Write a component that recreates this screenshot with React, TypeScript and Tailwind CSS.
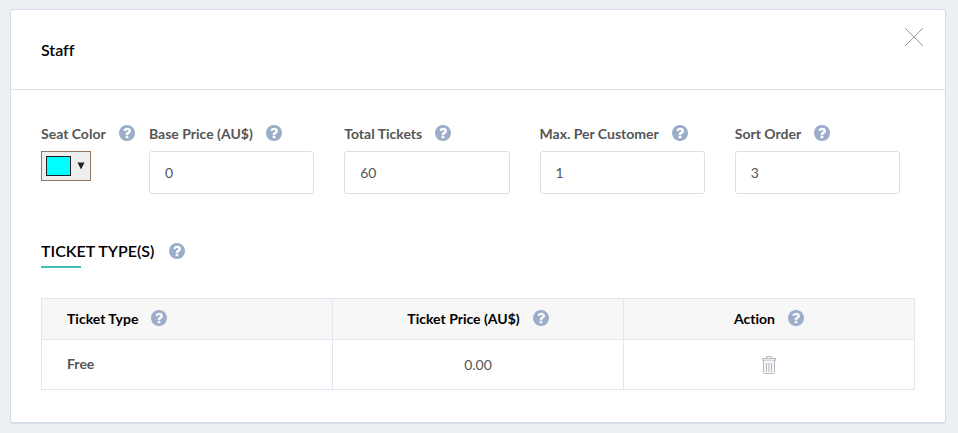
import { useState } from "react"

interface Field {
  id: string
  label: string
  value: string
}

const initialFields: Field[] = [
  { id: "base-price", label: "Base Price (AU$)", value: "0" },
  { id: "total-tickets", label: "Total Tickets", value: "60" },
  { id: "max-per-customer", label: "Max. Per Customer", value: "1" },
  { id: "sort-order", label: "Sort Order", value: "3" },
]

const ticketTypes = [{ name: "Free", price: "0.00" }]

function HelpIcon() {
  return (
    <svg viewBox="128 128 1536 1536" className="h-4 w-4 shrink-0 fill-[#9badc9]" aria-hidden="true">
      <path d="M1024 1376v-192q0-14-9-23t-23-9h-192q-14 0-23 9t-9 23v192q0 14 9 23t23 9h192q14 0 23-9t9-23zm256-672q0-88-55.5-163t-138.5-116-170-41q-243 0-371 213-15 24 8 42l132 100q7 6 19 6 16 0 25-12 53-68 86-92 34-24 86-24 48 0 85.5 26t37.5 59q0 38-20 61t-68 45q-63 28-115.5 86.5t-52.5 125.5v36q0 14 9 23t23 9h192q14 0 23-9t9-23q0-19 21.5-49.5t54.5-49.5q32-18 49-28.5t46-35 44.5-48 28-60.5 12.5-81zm384 192q0 209-103 385.5t-279.5 279.5-385.5 103-385.5-103-279.5-279.5-103-385.5 103-385.5 279.5-279.5 385.5-103 385.5 103 279.5 279.5 103 385.5z" />
    </svg>
  )
}

function TrashIcon() {
  return (
    <svg viewBox="0 0 14 18" className="h-[18px] w-3.5" fill="none" stroke="#b4b9c2" aria-hidden="true">
      <path d="M4.5 2V.5h5V2" />
      <path d="M.5 2.5h13v2H.5z" fill="#e9ebee" />
      <path d="M1.5 4.5v12q0 1 1 1h9q1 0 1-1v-12" fill="#f5f6f8" />
      <path d="M4.5 7v9M7 7v9M9.5 7v9" />
    </svg>
  )
}

export default function App() {
  const [fields, setFields] = useState(initialFields)

  const handleChange = (id: string, value: string) => {
    setFields(fields.map((field) => (field.id === id ? { ...field, value } : field)))
  }

  return (
    <div className="min-h-screen bg-[#ecf0f5] pt-[9px] pr-3 pb-2 pl-2.5 font-['Lato',sans-serif] text-sm text-[#555] [font-variant-ligatures:none]">
      <section className="rounded border border-b-2 border-[#d5dce5] bg-white">
        <header className="flex h-20 items-center justify-between border-b border-[#dce1e8] pr-[22px] pl-[30px]">
          <h1 className="text-base font-semibold text-black">Staff</h1>
          <button type="button" aria-label="Close" className="mb-[26px]">
            <svg viewBox="0 0 18 18" className="h-[18px] w-[18px]" fill="none" stroke="#999" aria-hidden="true">
              <path d="M0 0l18 18M18 0L0 18" />
            </svg>
          </button>
        </header>

        <div className="px-[30px] pt-[34px] pb-8">
          <div className="flex pr-[15px]">
            <div className="w-[108px] shrink-0">
              <div className="flex h-[18px] items-center gap-[13px]">
                <span id="seat-color" className="pt-0.5 font-bold whitespace-nowrap">
                  Seat Color
                </span>
                <HelpIcon />
              </div>
              <button
                type="button"
                aria-labelledby="seat-color"
                className="mt-[9px] flex h-[30px] w-[50px] items-center gap-1.5 border border-[#91765d] bg-[#eee] pl-1 text-[#222]"
              >
                <span className="h-5 w-[25px] border border-[#222] bg-[#00ffff]" />
                <svg viewBox="0 0 8 8" className="h-2 w-2" fill="currentColor" aria-hidden="true">
                  <path d="M0.5 0.5h7L4 7.5z" />
                </svg>
              </button>
            </div>

            <div className="grid flex-1 grid-cols-4 gap-[30px]">
              {fields.map((field) => (
                <div key={field.id}>
                  <div className="flex h-[18px] items-center gap-[13px]">
                    <label htmlFor={field.id} className="pt-0.5 font-bold whitespace-nowrap">
                      {field.label}
                    </label>
                    <HelpIcon />
                  </div>
                  <input
                    id={field.id}
                    type="text"
                    value={field.value}
                    onChange={(e) => handleChange(field.id, e.target.value)}
                    className="mt-[9px] h-[43px] w-full rounded-[3px] border border-[#dae1e3] px-[15px] text-sm outline-none"
                  />
                </div>
              ))}
            </div>
          </div>

          <div className="mt-[45px] flex items-center gap-[15px]">
            <h2 className="text-base font-semibold text-black">TICKET TYPE(S)</h2>
            <HelpIcon />
          </div>
          <hr className="mt-[3px] w-10 border-t-2 border-[#44bdb6]" />

          <table className="mt-[30px] w-full table-fixed border-collapse border border-[#e0e7f0]">
            <thead>
              <tr className="h-[41px] bg-[#f7f7f7] text-black">
                <th className="border border-[#e0e7f0] pb-0.5 pl-[25px] font-bold">
                  <div className="flex items-center gap-[13px]">
                    <span className="pt-0.5">Ticket Type</span>
                    <HelpIcon />
                  </div>
                </th>
                <th className="border border-[#e0e7f0] pb-0.5 font-bold">
                  <div className="flex items-center justify-center gap-[13px]">
                    <span className="pt-0.5">Ticket Price (AU$)</span>
                    <HelpIcon />
                  </div>
                </th>
                <th className="border border-[#e0e7f0] pb-0.5 font-bold">
                  <div className="flex items-center justify-center gap-[13px]">
                    <span className="pt-0.5">Action</span>
                    <HelpIcon />
                  </div>
                </th>
              </tr>
            </thead>
            <tbody>
              {ticketTypes.map((ticket) => (
                <tr key={ticket.name} className="h-[50px]">
                  <td className="border border-[#e0e7f0] pb-0.5 pl-[25px] font-bold">{ticket.name}</td>
                  <td className="border border-[#e0e7f0] text-center">{ticket.price}</td>
                  <td className="border border-[#e0e7f0] pb-0.5 text-center">
                    <button type="button" aria-label={`Delete ${ticket.name}`} className="align-middle">
                      <TrashIcon />
                    </button>
                  </td>
                </tr>
              ))}
            </tbody>
          </table>
        </div>
      </section>
    </div>
  )
}
